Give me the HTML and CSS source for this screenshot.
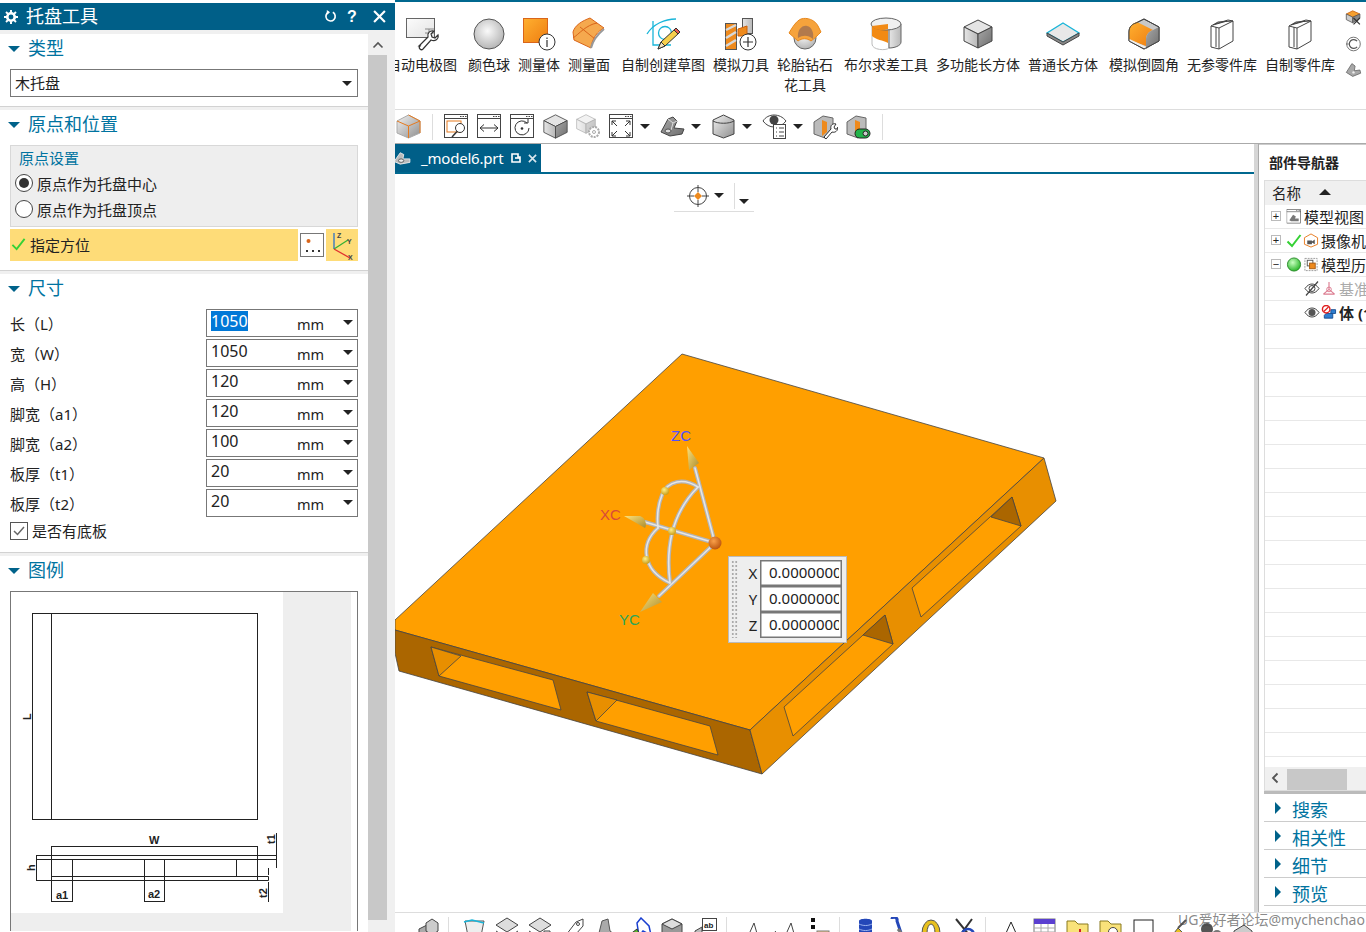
FILE: index.html
```html
<!DOCTYPE html>
<html lang="zh-CN">
<head>
<meta charset="utf-8">
<title>托盘工具</title>
<link rel="stylesheet" href="styles.css">
</head>
<body>
<svg class="defs" aria-hidden="true">
  <defs>
    <linearGradient id="gGray" x1="0" y1="0" x2="1" y2="1"><stop offset="0" stop-color="#f2f2f2"/><stop offset="1" stop-color="#8f8f8f"/></linearGradient>
    <linearGradient id="gSide" x1="0" y1="0" x2="1" y2="0"><stop offset="0" stop-color="#e6e6e6"/><stop offset="1" stop-color="#b8b8b8"/></linearGradient>
    <linearGradient id="gDark" x1="0" y1="0" x2="1" y2="1"><stop offset="0" stop-color="#a8a8a8"/><stop offset="1" stop-color="#6e6e6e"/></linearGradient>
    <linearGradient id="gOrange" x1="0" y1="0" x2="1" y2="1"><stop offset="0" stop-color="#ffb030"/><stop offset="1" stop-color="#ee7d11"/></linearGradient>
    <radialGradient id="gBall" cx=".45" cy=".4" r=".65"><stop offset="0" stop-color="#fafafa"/><stop offset="1" stop-color="#b0b0b0"/></radialGradient>
    <radialGradient id="gGreen" cx=".4" cy=".35" r=".7"><stop offset="0" stop-color="#c8ffc0"/><stop offset="1" stop-color="#22b322"/></radialGradient>
    <radialGradient id="gOrg" cx=".4" cy=".35" r=".7"><stop offset="0" stop-color="#f9a04a"/><stop offset="1" stop-color="#b8500a"/></radialGradient>
    <radialGradient id="gYel" cx=".4" cy=".35" r=".7"><stop offset="0" stop-color="#fff08a"/><stop offset="1" stop-color="#c89a14"/></radialGradient>
    <linearGradient id="gCone" x1="0" y1="0" x2="1" y2="1"><stop offset="0" stop-color="#ffe27a"/><stop offset="1" stop-color="#a98c30"/></linearGradient>
    <symbol id="cube" viewBox="0 0 30 30">
      <path d="M15 1 29 8 15 15 1 8Z" fill="#e4e4e4" stroke="#444" stroke-linejoin="round"/>
      <path d="M1 8 15 15V29L1 22Z" fill="url(#gSide)" stroke="#444" stroke-linejoin="round"/>
      <path d="M29 8 15 15V29L29 22Z" fill="url(#gDark)" stroke="#444" stroke-linejoin="round"/>
    </symbol>
    <symbol id="book" viewBox="0 0 24 32">
      <path d="M1 8 8 4 23 3V23L9 31 1 29Z" fill="#fff" stroke="#444"/>
      <path d="M1 8 9 10V31M9 10 23 3M6 9 6 29M5 6 18 2 23 3M3 7 17 3" fill="none" stroke="#444"/>
    </symbol>
    <symbol id="win" viewBox="0 0 25 25">
      <rect x=".5" y=".5" width="23" height="23" fill="#fff" stroke="#444"/>
      <path d="M0 4.5H24" stroke="#444"/><path d="M16 2.5h1.500M18.500 2.500h1.500M21 2.500h1.500" stroke="#444"/>
    </symbol>
  </defs>
</svg>
<div class="app">
  <aside class="panel">
    <div class="titlebar">
      <svg class="t-gear" viewBox="0 0 16 16"><circle cx="8" cy="8" r="4.300" fill="none" stroke="#fff" stroke-width="3"/><path d="M8 0v3M8 13v3M0 8h3M13 8h3M2.300 2.300l2.200 2.200M11.500 11.500l2.200 2.200M2.300 13.700l2.200-2.200M11.500 4.500l2.200-2.200" stroke="#fff" stroke-width="2.200"/></svg>
      <span class="t-name">托盘工具</span>
      <svg class="t-btn" viewBox="0 0 14 14"><path d="M9.500 2.500A5 5 0 1 1 5 2.300" fill="none" stroke="#fff" stroke-width="1.800"/><path d="M3 0v5l3.500-2.500z" fill="#fff"/></svg>
      <span class="t-help">?</span>
      <svg class="t-btn t-close" viewBox="0 0 12 12"><path d="M1 1 11 11M11 1 1 11" stroke="#fff" stroke-width="2"/></svg>
    </div>
    <div class="panel-body">
      <div class="sections">
        <section class="section">
          <h2 class="sec-head"><i class="tri"></i>类型</h2>
          <div class="select"><span>木托盘</span><i class="caret"></i></div>
        </section>
        <section class="section">
          <h2 class="sec-head"><i class="tri"></i>原点和位置</h2>
          <div class="group">
            <div class="group-title">原点设置</div>
            <div class="radio-row"><i class="radio on"></i>原点作为托盘中心</div>
            <div class="radio-row"><i class="radio"></i>原点作为托盘顶点</div>
          </div>
          <div class="spec-row">
            <div class="spec-label">
              <svg class="spec-check" viewBox="0 0 16 14"><path d="M1.500 8 6 12.500 14.500 1.500" fill="none" stroke="#35d135" stroke-width="2"/></svg>
              指定方位
            </div>
            <div class="spec-dots">
              <svg viewBox="0 0 22 22"><circle cx="7.500" cy="7" r="2" fill="#d9651a"/><path d="M5 16h2v2H5zM11 16h2v2h-2zM17 16h2v2h-2z" fill="#333"/></svg>
            </div>
            <div class="spec-axis">
              <svg viewBox="0 0 32 32"><path d="M8 20V4" stroke="#2a70c8" stroke-width="1.300"/><path d="M8 20 22 11" stroke="#35b035" stroke-width="1.300"/><path d="M8 20 24 29" stroke="#e03030" stroke-width="1.300"/><text x="11" y="9" class="ax">Z</text><text x="21" y="15" class="ax">Y</text><text x="22" y="31" class="ax">X</text></svg>
            </div>
          </div>
        </section>
        <section class="section">
          <h2 class="sec-head"><i class="tri"></i>尺寸</h2>
          <div class="dims">
            <div class="dim"><label class="dim-name">长（L）</label><div class="field"><span class="val sel">1050</span><span class="unit">mm</span><i class="caret"></i></div></div>
            <div class="dim"><label class="dim-name">宽（W）</label><div class="field"><span class="val">1050</span><span class="unit">mm</span><i class="caret"></i></div></div>
            <div class="dim"><label class="dim-name">高（H）</label><div class="field"><span class="val">120</span><span class="unit">mm</span><i class="caret"></i></div></div>
            <div class="dim"><label class="dim-name">脚宽（a1）</label><div class="field"><span class="val">120</span><span class="unit">mm</span><i class="caret"></i></div></div>
            <div class="dim"><label class="dim-name">脚宽（a2）</label><div class="field"><span class="val">100</span><span class="unit">mm</span><i class="caret"></i></div></div>
            <div class="dim"><label class="dim-name">板厚（t1）</label><div class="field"><span class="val">20</span><span class="unit">mm</span><i class="caret"></i></div></div>
            <div class="dim"><label class="dim-name">板厚（t2）</label><div class="field"><span class="val">20</span><span class="unit">mm</span><i class="caret"></i></div></div>
          </div>
          <div class="check-row"><svg class="checkbox" viewBox="0 0 18 18"><rect x=".5" y=".5" width="17" height="17" fill="#fff" stroke="#555"/><path d="M4 9l3.500 3.500L14 5" fill="none" stroke="#666" stroke-width="1.500"/></svg>是否有底板</div>
        </section>
        <section class="section last">
          <h2 class="sec-head"><i class="tri"></i>图例</h2>
          <div class="legend">
            <div class="legend-inner">
            <svg class="legend-img" viewBox="11 592 272 321">
              <g fill="none" stroke="#222" stroke-width="1">
                <rect x="32.500" y="613.500" width="225" height="206"/>
                <path d="M51.500 613V820"/>
                <path d="M51.500 846V902M257.500 846V880M51 846.500H257"/>
                <path d="M36 855.500H276.500V859.500H36M36.500 855V880.500M36 880.500H268.500V876.500H51.500"/>
                <path d="M72.500 859V902M144.500 859V902M164.500 859V902M236.500 859V876"/>
                <path d="M51 901.500H72M144 901.500H164"/>
                <path d="M276.500 833V868M268.500 868V875M268.500 882V902"/>
              </g>
              <g class="lg-t">
                <text x="149" y="844">W</text>
                <text x="56" y="899">a1</text>
                <text x="148" y="898">a2</text>
                <text transform="translate(31 720) rotate(-90)">L</text>
                <text transform="translate(35 871) rotate(-90)">h</text>
                <text transform="translate(275 844) rotate(-90)">t1</text>
                <text transform="translate(267 898) rotate(-90)">t2</text>
              </g>
            </svg>
            </div>
          </div>
        </section>
      </div>
      <div class="vscroll">
        <div class="v-up"><svg viewBox="0 0 12 8"><path d="M1.500 6.500 6 2l4.500 4.500" fill="none" stroke="#555" stroke-width="1.600"/></svg></div>
        <div class="v-thumb"></div>
      </div>
    </div>
  </aside>

  <main class="main">
    <div class="ribbon">
      <div class="rb-item first">
        <svg class="rb-ic" viewBox="0 0 36 36"><rect x="2.500" y="2.500" width="28" height="19" fill="#fff" stroke="#555"/><rect x="2.500" y="2.500" width="28" height="19" fill="url(#gGray)" opacity=".25"/><path d="M21 13h9M21 17h9M25 13v8" stroke="#888"/><path d="M15 30 24 21c-1-4 2-7 6-6l-3 3 1 3 3 1 3-3c1 4-3 7-7 5l-8 9c-2 2-5-1-3-3z" fill="#fff" stroke="#333" stroke-width="1.200"/></svg>
        <span>自动电极图</span>
      </div>
      <div class="rb-item sp">
        <svg class="rb-ic" viewBox="0 0 36 36"><circle cx="18" cy="18" r="15" fill="url(#gBall)" stroke="#555"/></svg>
        <span>颜色球</span>
      </div>
      <div class="rb-item">
        <svg class="rb-ic" viewBox="0 0 36 36"><rect x="2.500" y="2.500" width="24" height="24" fill="url(#gOrange)" stroke="#d9651a"/><circle cx="26" cy="26" r="8" fill="#fff" stroke="#333"/><path d="M26 24v7M26 21.500v1.500" stroke="#333" stroke-width="1.200"/></svg>
        <span>测量体</span>
      </div>
      <div class="rb-item">
        <svg class="rb-ic" viewBox="0 0 36 36"><path d="M2 16C4 9 11 5 19 2L33 12C27 15 21 22 20 32L3 24Z" fill="#f5a94e" stroke="#d9651a"/><path d="M9 11 24 23M2 22 C8 18 15 9 26 7" fill="none" stroke="#d9651a"/><path d="M20 32C22 24 27 18 33 13" fill="none" stroke="#999" stroke-width="2"/></svg>
        <span>测量面</span>
      </div>
      <div class="rb-item sp">
        <svg class="rb-ic" viewBox="0 0 36 36"><path d="M2 18C8 8 20 3 31 3" fill="none" stroke="#19b5d9" stroke-width="1.300"/><path d="M8 5V29H26" fill="none" stroke="#19b5d9" stroke-width="1.300"/><circle cx="20" cy="17" r="6.500" fill="none" stroke="#19b5d9" stroke-width="1.300"/><path d="M13 33 16 26 30 13 34 17 20 30Z" fill="#f7cf4c" stroke="#333"/><path d="M29 14 33 18 35 16 31 12Z" fill="#e85a4f" stroke="#333"/><path d="M13 33 16 26 20 30Z" fill="#f4e3c0" stroke="#333"/></svg>
        <span>自制创建草图</span>
      </div>
      <div class="rb-item">
        <svg class="rb-ic" viewBox="0 0 36 36"><rect x="2.500" y="7.500" width="11" height="26" fill="#ee8a1d" stroke="#555"/><path d="M3 14 13 9M3 22 13 16M3 30 13 24" stroke="#d8d8d8" stroke-width="2.500"/><rect x="19.500" y="2.500" width="10" height="15" fill="url(#gSide)" stroke="#555"/><path d="M15 13 24 10V20H15Z" fill="#ee8a1d" stroke="#c9600f"/><circle cx="25" cy="26" r="8" fill="#fff" stroke="#333"/><path d="M20 26h10M25 21v10" stroke="#333" stroke-width="1.200"/></svg>
        <span>模拟刀具</span>
      </div>
      <div class="rb-item tall">
        <svg class="rb-ic" viewBox="0 0 36 36"><circle cx="18" cy="22" r="11" fill="url(#gBall)" stroke="#666"/><path d="M2 17C5 12 9 5 14 3 20 1 28 4 31 10L34 16C30 20 27 23 24 25 20 22 15 22 11 25Z" fill="#f6a33c" stroke="#e8871a"/><path d="M11 22C10 14 15 9 20 10S27 17 26 23C21 19 16 19 11 22Z" fill="#b27a4c"/></svg>
        <span>轮胎钻石花工具</span>
      </div>
      <div class="rb-item sp">
        <svg class="rb-ic" viewBox="0 0 36 36"><path d="M4 10V28C4 34 18 35 21 32V15L20 9C15 13 6 13 4 10Z" fill="#fff" stroke="#bbb"/><path d="M4 10C6 13 15 14 20 12V27C15 24 8 24 4 20Z" fill="#f28a14"/><path d="M21 8V32C26 32 33 30 33 26V8Z" fill="url(#gSide)" stroke="#666"/><ellipse cx="18" cy="8" rx="15" ry="6" fill="#f0f0f0" stroke="#666"/><path d="M4 10C6 14 14 15 20 13V8Z" fill="#f28a14"/></svg>
        <span>布尔求差工具</span>
      </div>
      <div class="rb-item">
        <svg class="rb-ic" viewBox="0 0 36 36"><use href="#cube" x="3" y="3" width="30" height="30"/></svg>
        <span>多功能长方体</span>
      </div>
      <div class="rb-item">
        <svg class="rb-ic" viewBox="0 0 36 36"><path d="M18 7 34 17 18 26 2 17Z" fill="#e8e8e8" stroke="#19b5d9" stroke-width="1.300"/><path d="M2 17V20L18 29 34 20V17L18 26Z" fill="#888" stroke="#444"/></svg>
        <span>普通长方体</span>
      </div>
      <div class="rb-item sp">
        <svg class="rb-ic" viewBox="0 0 36 36"><path d="M18 3 33 11V25L18 33 3 25V16C3 10 7 8 10 7Z" fill="#c8c8c8" stroke="#444"/><path d="M3 24V16C3 10 7 7 11 6L27 14C22 16 20 19 20 24V30Z" fill="url(#gOrange)"/><path d="M20 24C20 19 22 16 27 14L33 11V25L20 33Z" fill="url(#gDark)"/><path d="M3 24 20 32" stroke="#eee" stroke-width="2"/><path d="M18 3 33 11V25L18 33 3 25V16C3 10 7 8 10 7Z" fill="none" stroke="#444"/></svg>
        <span>模拟倒圆角</span>
      </div>
      <div class="rb-item">
        <svg class="rb-ic" viewBox="0 0 36 36"><use href="#book" x="6" y="2" width="24" height="32"/></svg>
        <span>无参零件库</span>
      </div>
      <div class="rb-item">
        <svg class="rb-ic" viewBox="0 0 36 36"><use href="#book" x="6" y="2" width="24" height="32"/></svg>
        <span>自制零件库</span>
      </div>
      <div class="rb-side">
        <svg viewBox="0 0 20 20"><path d="M9 1 18 5 9 9 1 5Z" fill="#f5a030" stroke="#c9600f"/><path d="M1 5V12L9 16V9Z" fill="#ccc" stroke="#555"/><path d="M18 5V10L9 16V9Z" fill="#888" stroke="#555"/><path d="M10 10 18 18M18 10 10 18" stroke="#333" stroke-width="1.500"/></svg>
        <svg viewBox="0 0 20 20"><circle cx="10" cy="10" r="8.500" fill="none" stroke="#555"/><path d="M14.500 6.500A5.500 5.500 0 1 0 14.500 13.500" fill="none" stroke="#555" stroke-width="1.500"/><path d="M1 10h3" stroke="#555"/></svg>
        <svg viewBox="0 0 20 20"><path d="M1 13 8 2 12 5 11 11 18 10 19 14 9 18Z" fill="#a8a8a8" stroke="#666"/><circle cx="10" cy="13" r="1.500" fill="#eee"/></svg>
      </div>
    </div>

    <div class="toolbar">
      <svg class="tb" viewBox="0 0 25 25"><path d="M12.500 1 24 7V19L12.500 24 1 19V7Z" fill="url(#gGray)" stroke="#aaa"/><path d="M12.500 12 24 7M12.500 12 1 7M12.500 12V24" stroke="#e67a1e"/><path d="M12.500 1 24 7V19" fill="none" stroke="#e67a1e"/></svg>
      <i class="tb-div"></i>
      <svg class="tb" viewBox="0 0 25 25"><use href="#win" width="25" height="25"/><rect x="3" y="7" width="14" height="11" fill="none" stroke="#e67a1e"/><circle cx="16" cy="14" r="4.500" fill="#fff" stroke="#333"/><path d="M13 17.500 8 23" stroke="#333" stroke-width="1.500"/></svg>
      <svg class="tb" viewBox="0 0 25 25"><use href="#win" width="25" height="25"/><path d="M3 14H21M3 14l4-3.500M3 14l4 3.500M21 14l-4-3.500M21 14l-4 3.500" fill="none" stroke="#333"/></svg>
      <svg class="tb" viewBox="0 0 25 25"><use href="#win" width="25" height="25"/><path d="M17 9A7 7 0 1 0 19 14" fill="none" stroke="#333"/><path d="M14 9h4V5" fill="none" stroke="#333"/><circle cx="12" cy="14.500" r="1.300" fill="#333"/></svg>
      <svg class="tb" viewBox="0 0 25 25"><use href="#cube" x="0" y="0" width="25" height="25"/></svg>
      <svg class="tb" viewBox="0 0 25 25"><g opacity=".45"><use href="#cube" x="0" y="0" width="20" height="20"/></g><circle cx="18" cy="18" r="5" fill="#fff" stroke="#aaa" stroke-width="2" stroke-dasharray="2 1"/><circle cx="18" cy="18" r="1.500" fill="none" stroke="#aaa"/></svg>
      <svg class="tb" viewBox="0 0 25 25"><use href="#win" width="25" height="25"/><path d="M3 7l5 5M3 7v4M3 7h4M21 7l-5 5M21 7v4M21 7h-4M3 22l5-5M3 22v-4M3 22h4M21 22l-5-5M21 22v-4M21 22h-4" fill="none" stroke="#333"/></svg>
      <i class="caret tb-caret"></i>
      <svg class="tb" viewBox="0 0 25 25"><path d="M1 18 8 5 13 3 17 7 14 14 24 15 22 20 10 22Z" fill="url(#gDark)" stroke="#444"/><path d="M8 5 13 9 17 7M13 9 11 16" fill="none" stroke="#ddd"/><ellipse cx="8" cy="17" rx="3" ry="2" fill="#ddd" stroke="#555"/></svg>
      <i class="caret tb-caret"></i>
      <svg class="tb" viewBox="0 0 25 25"><path d="M12.500 1 23 6V20L12.500 24 2 20V6Z" fill="url(#gGray)" stroke="#444"/><path d="M2 7C7 10 18 10 23 7" fill="none" stroke="#444"/></svg>
      <i class="caret tb-caret"></i>
      <svg class="tb" viewBox="0 0 25 25"><path d="M1 7C6 -1 18 -1 24 7 21 11 17 13 12 13 8 13 4 11 1 7Z" fill="#fff" stroke="#444"/><circle cx="12" cy="6" r="4.500" fill="#444"/><rect x="11.500" y="10.500" width="12" height="14" fill="#fff" stroke="#444"/><path d="M14 14h1M17 14h5M14 18h1M17 18h5M14 22h1M17 22h5" stroke="#444"/></svg>
      <i class="caret tb-caret"></i>
      <svg class="tb" viewBox="0 0 25 25"><path d="M1 8 10 2 20 4V14L12 24 1 20Z" fill="#bbb" stroke="#666"/><path d="M9 6V22L14 18V8Z" fill="#ee8a1d"/><path d="M11 23 18 15c-1-4 2-6 5-5l-2 3 1 2 2 0 1-2c0 4-3 6-6 5l-6 7z" fill="#fff" stroke="#333"/></svg>
      <svg class="tb" viewBox="0 0 25 25"><path d="M1 8 10 2 20 4V15L12 24 1 20Z" fill="#bbb" stroke="#666"/><path d="M9 6V22L14 18V8Z" fill="#ee8a1d"/><rect x="9" y="15" width="15" height="9" rx="4.500" fill="#22b34a" stroke="#222"/><circle cx="19.500" cy="19.500" r="2.500" fill="#ccc" stroke="#222"/></svg>
      <i class="tb-div"></i>
    </div>

    <div class="work">
      <div class="work-left">
        <div class="tabs">
          <div class="tab">
            <svg class="tab-ic" viewBox="0 0 20 16"><path d="M1 12 8 2 12 4 11 9 19 9 19 13 8 15Z" fill="#bbb" stroke="#eee"/><ellipse cx="9" cy="11" rx="3" ry="2" fill="#eee" stroke="#555"/></svg>
            <span class="tab-name">_model6.prt</span>
            <svg class="tab-file" viewBox="0 0 10 10"><path d="M1 1H7V4H9V9H1Z" fill="none" stroke="#fff" stroke-width="1.600"/><path d="M4 5h5" stroke="#fff" stroke-width="1.600"/></svg>
            <svg class="tab-close" viewBox="0 0 10 10"><path d="M1 1 9 9M9 1 1 9" stroke="#d8e6ee" stroke-width="1.800"/></svg>
          </div>
        </div>
        <div class="viewport">
          <svg class="scene" viewBox="395 174 859 738">
            <g stroke="#444" stroke-width=".8" stroke-linejoin="round">
              <path d="M682 354 1044 458 750 730 395 630V620Z" fill="#ff9f00"/>
              <path d="M395 630 750 730 762 774 399 671 395 653Z" fill="#ab6600"/>
              <path d="M750 730 1044 458 1056 501 762 774Z" fill="#e88f00"/>
              <path d="M431 647 553 680 561 710 439 676Z" fill="#ff9f00"/>
              <path d="M431 647 461 656 439 676Z" fill="#e88f00"/>
              <path d="M587 692 710 726 718 755 596 721Z" fill="#ff9f00"/>
              <path d="M587 692 617 700 596 721Z" fill="#e88f00"/>
              <path d="M912 588 1012 497 1021 526 921 617Z" fill="#ff9f00"/>
              <path d="M991 517 1012 497 1021 526Z" fill="#ab6600"/>
              <path d="M784 707 885 615 893 644 793 736Z" fill="#ff9f00"/>
              <path d="M863 635 885 615 893 644Z" fill="#ab6600"/>
            </g>
            <g fill="none" stroke-linecap="round">
              <g stroke="#b4b4b4" stroke-width="4">
                <path d="M715 543 695 468"/>
                <path d="M715 543 645 522"/>
                <path d="M715 543 659 596"/>
                <path d="M698 487C684 478 668 480 662 495 657 507 657 518 658 528"/>
                <path d="M698 487C680 505 664 535 670 583"/>
                <path d="M658 528C640 544 642 570 670 583"/>
              </g>
              <g stroke="#e6e6e6" stroke-width="1.600">
                <path d="M715 543 695 468"/>
                <path d="M715 543 645 522"/>
                <path d="M715 543 659 596"/>
                <path d="M698 487C684 478 668 480 662 495 657 507 657 518 658 528"/>
                <path d="M698 487C680 505 664 535 670 583"/>
                <path d="M658 528C640 544 642 570 670 583"/>
              </g>
            </g>
            <path d="M687 446 699 463 689 470Z" fill="url(#gCone)"/>
            <path d="M624 516 640 516C646 518 647 525 645 528Z" fill="url(#gCone)"/>
            <path d="M640 612 653 593 662 602Z" fill="url(#gCone)"/>
            <circle cx="715" cy="543" r="6.500" fill="url(#gOrg)"/>
            <circle cx="665" cy="491" r="4" fill="url(#gYel)"/>
            <circle cx="672" cy="531" r="4" fill="url(#gYel)"/>
            <circle cx="646" cy="560" r="4" fill="url(#gYel)"/>
            <text x="671" y="441" class="ax3" fill="#5050ff">ZC</text>
            <text x="600" y="520" class="ax3" fill="#d84a3a">XC</text>
            <text x="619" y="625" class="ax3" fill="#2aa65a">YC</text>
          </svg>
          <div class="snap">
            <svg class="snap-ic" viewBox="0 0 22 22"><circle cx="11" cy="11" r="8.500" fill="none" stroke="#444"/><path d="M11 0v7M11 15v7M0 11h7M15 11h7" stroke="#444"/><path d="M11 7 15 11 11 15 7 11Z" fill="#ee8a1d"/></svg>
            <i class="caret snap-c1"></i>
            <i class="snap-div"></i>
            <i class="caret snap-c2"></i>
          </div>
          <div class="coords">
            <div class="grip"></div>
            <div class="coord-rows">
              <div class="coord"><span class="c-l">X</span><span class="c-f"><span class="c-v">0.00000000</span></span></div>
              <div class="coord"><span class="c-l">Y</span><span class="c-f"><span class="c-v">0.00000000</span></span></div>
              <div class="coord"><span class="c-l">Z</span><span class="c-f"><span class="c-v">0.00000000</span></span></div>
            </div>
          </div>
        </div>
      </div>
      <aside class="nav">
        <div class="nav-title">部件导航器</div>
        <div class="nav-table">
          <div class="nav-head"><span>名称</span><i class="up-tri"></i></div>
          <div class="tree">
            <div class="node"><i class="pm">+</i><svg class="n-ic n-first" viewBox="0 0 16 16"><use href="#win" width="16" height="16"/><path d="M3 12 7 6 10 8 9 10 13 10 13 13H5Z" fill="#777"/></svg><span>模型视图</span></div>
            <div class="node"><i class="pm">+</i><svg class="n-ic" viewBox="0 0 16 14"><path d="M1.500 8 6 12.500 14.500 1.500" fill="none" stroke="#35d135" stroke-width="2"/></svg><svg class="n-ic" viewBox="0 0 16 16"><path d="M8 1 15 5V12L8 15 1 12V5Z" fill="#fff" stroke="#e67a1e"/><path d="M4 8h5v4H4zM9 9l3-2v5l-3-2" fill="#555"/></svg><span class="n-t2">摄像机</span></div>
            <div class="node"><i class="pm">−</i><svg class="n-ic" viewBox="0 0 16 16"><circle cx="8" cy="8" r="7" fill="url(#gGreen)" stroke="#2a8a2a"/></svg><svg class="n-ic" viewBox="0 0 16 16"><rect x="1.500" y="1.500" width="13" height="13" fill="#fff" stroke="#999" stroke-dasharray="2 1"/><rect x="4" y="3.500" width="6" height="6" fill="none" stroke="#555"/><rect x="6.500" y="6.500" width="6" height="6" fill="#ee8a1d" stroke="#a85a10"/></svg><span class="n-t2">模型历史记录</span></div>
            <div class="node lv2 gray"><svg class="n-ic" viewBox="0 0 16 14"><path d="M1 7C5 1 11 1 15 7 11 13 5 13 1 7Z" fill="#fff" stroke="#444"/><circle cx="8" cy="7" r="3" fill="none" stroke="#444"/><path d="M2 14 14 0" stroke="#444" stroke-width="1.200"/></svg><svg class="n-ic" viewBox="0 0 16 16"><path d="M8 1V9M8 9 2 14M8 9 14 14M2 14H14" fill="none" stroke="#dc7c90" stroke-width="1.200"/><circle cx="8" cy="9" r="2.500" fill="none" stroke="#dc7c90"/></svg><span>基准坐标系</span></div>
            <div class="node lv2 strong"><svg class="n-ic" viewBox="0 0 16 14"><path d="M1 7C5 1 11 1 15 7 11 13 5 13 1 7Z" fill="#fff" stroke="#444"/><circle cx="8" cy="7" r="3.500" fill="#555"/></svg><svg class="n-ic" viewBox="0 0 16 16"><path d="M5 9H12V14H3V11Z" fill="#2e7fd1" stroke="#1a4f90"/><path d="M10 5h5v4h-5z" fill="#2e7fd1" stroke="#1a4f90"/><circle cx="5" cy="4.500" r="4" fill="#fff" stroke="#e02020" stroke-width="1.500"/><path d="M2.500 7 7.500 2" stroke="#e02020" stroke-width="1.500"/></svg><span>体 (1)</span></div>
          </div>
          <div class="hscroll">
            <svg class="h-left" viewBox="0 0 8 12"><path d="M6.500 1.500 2 6l4.500 4.500" fill="none" stroke="#555" stroke-width="1.800"/></svg>
            <i class="h-thumb"></i>
          </div>
        </div>
        <div class="nav-bar"></div>
        <div class="acc"><i class="acc-tri"></i><span>搜索</span></div>
        <div class="acc"><i class="acc-tri"></i><span>相关性</span></div>
        <div class="acc"><i class="acc-tri"></i><span>细节</span></div>
        <div class="acc"><i class="acc-tri"></i><span>预览</span></div>
      </aside>
    </div>

    <div class="bottombar">
      <svg class="bb" viewBox="0 0 25 25"><path d="M4 12 12 8 12 24 4 24Z" fill="#aaa" stroke="#444"/><path d="M11 6 17 2 23 6V14L17 18 11 14Z" fill="#ccc" stroke="#444"/></svg>
      <i class="bb-div"></i>
      <svg class="bb" viewBox="0 0 25 25"><path d="M3 4H22L18 24H7Z" fill="#eee" stroke="#555"/><path d="M2 5 10 3 22 6" fill="none" stroke="#19b5d9" stroke-width="1.500"/></svg>
      <svg class="bb" viewBox="0 0 25 25"><path d="M12 1 23 8 12 15 1 8Z" fill="#ddd" stroke="#444"/><path d="M1 14 12 21 23 14" fill="none" stroke="#444"/></svg>
      <svg class="bb" viewBox="0 0 25 25"><path d="M12 1 23 8 12 15 1 8Z" fill="#ddd" stroke="#444"/><path d="M1 14 12 21 18 18" fill="none" stroke="#444"/><path d="M16 14h6v10h-6z" fill="#eee" stroke="#444"/></svg>
      <svg class="bb" viewBox="0 0 25 25"><path d="M2 22 15 5 22 2 22 9 8 25Z" fill="#fff" stroke="#444"/><circle cx="17" cy="7" r="1.500" fill="none" stroke="#444"/></svg>
      <svg class="bb" viewBox="0 0 25 25"><path d="M3 24 8 4 14 2 16 14 24 20V25Z" fill="#aaa" stroke="#555"/></svg>
      <svg class="bb" viewBox="0 0 25 25"><path d="M14 1 22 9 24 18 16 14 12 19 10 6Z" fill="#fff" stroke="#1a3fd0" stroke-width="1.500"/><path d="M2 18 10 12 14 20 5 25Z" fill="#5ab82a" stroke="#333"/></svg>
      <svg class="bb" viewBox="0 0 25 25"><path d="M12 2 22 7V20L12 25 2 20V7Z" fill="#999" stroke="#444"/><path d="M12 2 22 7 12 12 2 7Z" fill="#ddd" stroke="#444"/></svg>
      <svg class="bb" viewBox="0 0 25 25"><rect x="9.500" y="1.500" width="14" height="12" fill="#fff" stroke="#444"/><text x="11" y="11" class="bb-t">ab</text><path d="M2 14 9 10V25H2Z" fill="#bbb" stroke="#444"/></svg>
      <i class="bb-div"></i>
      <svg class="bb" viewBox="0 0 25 25"><path d="M2 16H22M14 6 6 24M14 6 18 20" fill="none" stroke="#444"/></svg>
      <svg class="bb" viewBox="0 0 25 25"><path d="M2 14 10 24 18 6 22 20" fill="none" stroke="#444"/></svg>
      <svg class="bb" viewBox="0 0 25 25"><rect x="5" y="1" width="4" height="4" fill="#111"/><rect x="5" y="8" width="4" height="4" fill="#111"/><rect x="5" y="15" width="4" height="9" fill="#e02020"/><rect x="11" y="14" width="12" height="11" fill="#f2c98c" stroke="#777"/></svg>
      <i class="bb-div"></i>
      <svg class="bb" viewBox="0 0 25 25"><path d="M6 4C6 1 19 1 19 4V25H6Z" fill="#2447b8"/><path d="M6 7C10 9 15 9 19 7M6 12C10 14 15 14 19 12M6 17C10 19 15 19 19 17" stroke="#9db4f0" fill="none"/></svg>
      <svg class="bb" viewBox="0 0 25 25"><path d="M6 2C6 -1 12 0 11 4L18 25" fill="none" stroke="#2447b8" stroke-width="3"/><path d="M12 12 20 22" stroke="#777" stroke-width="3"/></svg>
      <svg class="bb" viewBox="0 0 25 25"><ellipse cx="12" cy="16" rx="9" ry="13" fill="#e8c11e" stroke="#555"/><ellipse cx="12" cy="16" rx="4" ry="9" fill="#fff" stroke="#555"/></svg>
      <svg class="bb" viewBox="0 0 25 25"><path d="M4 2 22 24M20 2 4 24" stroke="#333" stroke-width="2"/><circle cx="16" cy="18" r="6" fill="none" stroke="#2447b8" stroke-width="2.500"/></svg>
      <i class="bb-div"></i>
      <svg class="bb" viewBox="0 0 25 25"><path d="M3 25 12 5 21 25" fill="none" stroke="#222"/></svg>
      <svg class="bb" viewBox="0 0 25 25"><rect x="2" y="2" width="21" height="23" fill="#fff" stroke="#777"/><rect x="2" y="2" width="21" height="5" fill="#5a3fd0"/><path d="M2 11H23M2 15H23M2 19H23M9 7V25M16 7V25" stroke="#aaa"/></svg>
      <svg class="bb" viewBox="0 0 25 25"><path d="M2 4H10L13 7H23V25H2Z" fill="#f9e27a" stroke="#8a7a20"/><path d="M15 12V22M10 17H20" stroke="#d02020" stroke-width="2"/></svg>
      <svg class="bb" viewBox="0 0 25 25"><path d="M2 4H10L13 7H23V25H2Z" fill="#f9e27a" stroke="#8a7a20"/><circle cx="15" cy="15" r="4.500" fill="#fff" stroke="#444"/></svg>
      <svg class="bb" viewBox="0 0 25 25"><rect x="3" y="3" width="19" height="21" fill="#fff" stroke="#222"/></svg>
      <svg class="bb" viewBox="0 0 25 25"><path d="M3 25 14 11 18 15 9 25Z" fill="#e8c11e" stroke="#555"/><path d="M14 11 22 3" stroke="#555" stroke-width="2"/></svg>
      <svg class="bb" viewBox="0 0 25 25"><circle cx="10" cy="12" r="6" fill="#555"/><circle cx="20" cy="18" r="5" fill="#777"/></svg>
      <svg class="bb" viewBox="0 0 25 25"><path d="M4 14 14 8 22 14V25H4Z" fill="#ccc" stroke="#444"/></svg>
    </div>
    <div class="watermark">UG爱好者论坛@mychenchao</div>
  </main>
</div>
</body>
</html>
```

FILE: styles.css
```css
* { box-sizing: border-box; }
html, body { margin: 0; height: 100%; overflow: hidden; background: #fff; }
body { font-family: "Noto Sans", "Noto Sans CJK SC", sans-serif; color: #222; font-size: 15px; }
i { display: block; font-style: normal; }
.defs { position: absolute; width: 0; height: 0; }
.app { display: flex; height: 932px; width: 1366px; overflow: hidden; }

/* left dialog */
.panel { width: 395px; flex: none; display: flex; flex-direction: column; padding-top: 3px; background: #fff; }
.titlebar { height: 27px; flex: none; background: #005f88; color: #fff; display: flex; align-items: center; padding-left: 4px; }
.t-gear { width: 14px; height: 14px; margin-right: 8px; }
.t-name { font-size: 18px; line-height: 27px; flex: 1; }
.t-btn { width: 13px; height: 13px; }
.t-help { font-family: "Liberation Sans", sans-serif; font-weight: 700; font-size: 16px; width: 14px; margin: 0 14px 0 8px; text-align: center; }
.t-close { margin-right: 9px; }

.panel-body { flex: 1; min-height: 0; display: flex; background: #f0f0f0; padding: 4px 7px 0 0; overflow: hidden; }
.sections { width: 368px; flex: none; display: flex; flex-direction: column; gap: 3px; }
.section { background: #fff; padding: 0 10px 9px; border-bottom: 1px solid #d2d2d2; }
.section.last { flex: 1; min-height: 0; padding-bottom: 0; border-bottom: 0; overflow: hidden; }
.sec-head { margin: 0 0 0 -2px; height: 30px; padding-bottom: 2px; font-size: 18px; font-weight: 400; color: #0073a0; display: flex; align-items: center; line-height: 28px; }
.tri { width: 0; height: 0; border-left: 6px solid transparent; border-right: 6px solid transparent; border-top: 6px solid #00628a; margin-right: 8px; margin-top: 1px; }
.caret { width: 0; height: 0; border-left: 5px solid transparent; border-right: 5px solid transparent; border-top: 5px solid #222; }
.select { margin-top: 5px; height: 28px; border: 1px solid #777; display: flex; align-items: center; justify-content: space-between; padding: 0 5px 0 4px; font-size: 15px; }
.select span { margin-top: -1px; }

.group { margin-top: 5px; height: 82px; background: #eee; border: 1px solid #d8d8d8; }
.group-title { color: #0073a0; font-size: 15px; line-height: 24px; height: 24px; padding-left: 8px; }
.radio-row { height: 26px; display: flex; align-items: center; gap: 4px; padding-left: 4px; font-size: 15px; }
.radio { width: 18px; height: 18px; border-radius: 50%; border: 1.300px solid #444; background: #fff; position: relative; }
.radio.on::after { content: ""; position: absolute; left: 2.500px; top: 2.500px; width: 10.500px; height: 10.500px; border-radius: 50%; background: #333; }
.spec-row { margin-top: 2px; height: 32px; display: flex; align-items: center; }
.spec-label { width: 288px; height: 32px; background: #fedc78; display: flex; align-items: center; padding: 0 0 2px 1px; gap: 4px; font-size: 15px; }
.spec-check { width: 15px; height: 14px; }
.spec-dots { width: 24px; height: 24px; margin: 0 2px; border: 1px solid #777; background: #fff; }
.spec-dots svg { display: block; width: 22px; height: 22px; }
.spec-axis { width: 32px; height: 32px; background: #fedc78; }
.spec-axis svg { display: block; width: 32px; height: 32px; }
.ax { font: 700 7px "Liberation Sans", sans-serif; fill: #444; }

.dims { margin-top: 5px; display: flex; flex-direction: column; gap: 2px; }
.dim { height: 28px; display: flex; align-items: center; }
.dim-name { width: 196px; font-size: 15px; color: #222; }
.field { width: 152px; height: 28px; border: 1px solid #777; display: flex; align-items: center; position: relative; padding-left: 4px; }
.val { font-size: 16px; line-height: 20px; width: 86px; margin-top: -4px; }
.val.sel { background: linear-gradient(#0078d7, #0078d7) no-repeat 0 0 / 37px 100%; color: #fff; }
.unit { font-size: 14.500px; width: 46px; margin-top: 1px; }
.field .caret { margin-top: -2px; }
.check-row { margin-top: 4px; height: 18px; display: flex; align-items: center; gap: 4px; margin-bottom: 4px; font-size: 15px; }
.checkbox { width: 18px; height: 18px; margin-top: 1px; }

.legend { margin-top: 5px; height: 340px; border: 1px solid #777; border-bottom: 0; background: #fff; padding-right: 6px; }
.legend-inner { background: #eee; height: 100%; }
.legend-img { display: block; width: 272px; height: 321px; background: #fff; }
.lg-t text { font: 700 11px "Liberation Sans", sans-serif; fill: #222; }

.vscroll { width: 20px; flex: none; display: flex; flex-direction: column; height: 886px; }
.v-up { height: 21px; background: #f0f0f0; display: flex; align-items: center; justify-content: center; }
.v-up svg { width: 12px; height: 8px; }
.v-thumb { flex: 1; background: #c8c8c8; margin-right: 1px; }

/* main */
.main { flex: 1; min-width: 0; display: flex; flex-direction: column; position: relative; overflow: hidden; }
.ribbon { height: 110px; flex: none; border-top: 2px solid #00688f; border-bottom: 1px solid #ddd; display: flex; gap: 8px; align-items: flex-start; position: relative; }
.rb-item { display: flex; flex-direction: column; align-items: center; flex: none; font-size: 14px; color: #222; line-height: 20px; text-align: center; padding-top: 14px; }
.rb-item.first { margin-left: -8px; }
.rb-item.sp { margin-left: 3px; }
.rb-item.tall { width: 56px; }
.rb-ic { width: 36px; height: 36px; margin-bottom: 3px; flex: none; }
.rb-side { position: absolute; left: 950px; top: 8px; display: flex; flex-direction: column; gap: 10px; }
.rb-side svg { display: block; width: 17px; height: 16px; }

.toolbar { height: 34px; flex: none; border-bottom: 1px solid #aaa; display: flex; align-items: center; gap: 8px; padding-left: 1px; }
.tb { width: 25px; height: 25px; flex: none; }
.tb-div { width: 1px; height: 26px; background: #ddd; margin: 0 3px; flex: none; }
.tb-caret { flex: none; width: 10px; position: relative; left: -2px; }

.work { flex: 1; min-height: 0; display: flex; }
.work-left { flex: 1; min-width: 0; display: flex; flex-direction: column; }
.tabs { height: 30px; flex: none; border-bottom: 2px solid #00688f; display: flex; }
.tab { width: 146px; background: #005f88; color: #fff; display: flex; align-items: center; overflow: hidden; }
.tab-ic { width: 18px; height: 14px; margin-left: -2px; margin-right: 10px; flex: none; }
.tab-name { font-size: 15px; line-height: 28px; letter-spacing: -.2px; }
.tab-file { width: 10px; height: 10px; margin-left: 7px; flex: none; }
.tab-close { width: 9px; height: 9px; margin-left: 7px; flex: none; }
.viewport { flex: 1; min-height: 0; position: relative; background: #fff; overflow: hidden; }
.scene { position: absolute; inset: 0; width: 859px; height: 738px; }
.ax3 { font: 15px "Liberation Sans", sans-serif; }
.snap { position: absolute; left: 279px; top: 8px; width: 80px; height: 30px; border-bottom: 1px solid #ddd; }
.snap-ic { position: absolute; left: 13px; top: 3px; width: 22px; height: 22px; }
.snap-c1 { position: absolute; left: 40px; top: 11px; }
.snap-div { position: absolute; left: 60px; top: 1px; width: 1px; height: 26px; background: #ddd; }
.snap-c2 { position: absolute; left: 65px; top: 17px; }
.coords { position: absolute; left: 333px; top: 382px; width: 119px; height: 87px; background: #eee; border: 1px solid #bbb; display: flex; padding: 3px 4px 0 2px; }
.grip { width: 7px; height: 78px; background: radial-gradient(circle, #aaa 1px, transparent 1.300px) 0 0 / 3.500px 4px; }
.coord-rows { display: flex; flex-direction: column; margin-left: 2px; }
.coord { display: flex; align-items: center; height: 26px; }
.c-l { width: 20px; text-align: center; padding-left: 6px; font-size: 15px; color: #222; }
.c-f { width: 82px; height: 26px; border: 1px solid #777; background: #fff; font-size: 15px; line-height: 22px; padding-left: 8px; color: #222; box-shadow: inset 0 0 0 .5px #777; }
.c-v { display: block; width: 70px; overflow: hidden; white-space: nowrap; }

/* navigator */
.nav { width: 112px; flex: none; border-left: 4px solid #d6d6d6; display: flex; flex-direction: column; padding-left: 1px; background: #fff; box-shadow: inset 1px 0 0 #aaa; padding-bottom: 6px; position: relative; }
.nav-title { height: 36px; flex: none; font-size: 14px; font-weight: 700; line-height: 36px; padding-left: 10px; border-top: 1px solid #ccc; }
.nav-table { flex: 1; min-height: 0; display: flex; flex-direction: column; margin-left: 5px; border-left: 1px solid #ddd; }
.nav-head { height: 25px; flex: none; background: #f0f0f0; border-top: 1px solid #ddd; display: flex; align-items: center; padding: 0 0 2px 7px; font-size: 14.500px; gap: 18px; }
.up-tri { width: 0; height: 0; border-left: 6px solid transparent; border-right: 6px solid transparent; border-bottom: 6px solid #222; }
.tree { flex: 1; min-height: 0; overflow: hidden; position: relative; background: repeating-linear-gradient(#fff 0 23px, #e8e8e8 23px 24px); }
.node { height: 24px; display: flex; align-items: center; padding: 0 0 2px 6px; font-size: 15px; white-space: nowrap; overflow: hidden; position: relative; }
.pm { width: 10px; height: 10px; font-size: 11px; line-height: 9px; text-align: center; border: 1px solid #bbb; font-family: "Liberation Sans", sans-serif; background: #fff; flex: none; margin-right: 5px; color: #222; }
.n-ic { width: 16px; height: 15px; flex: none; margin-right: 1px; }
.n-first { margin-right: 2px; }
.n-t2 { margin-left: 1px; }
.node.lv2 { padding-left: 39px; }
.node.lv2 span { margin-left: 1px; }
.node.gray { color: #aaa; }
.node.strong { font-weight: 700; }
.hscroll { height: 24px; flex: none; background: #f0f0f0; display: flex; align-items: stretch; padding: 2px 0 0 6px; border-bottom: 1px solid #ddd; }
.h-left { width: 8px; height: 12px; margin: 3px 8px 0 0; flex: none; }
.h-thumb { width: 60px; background: #c8c8c8; }
.nav-bar { height: 3px; flex: none; background: #bbb; margin: 0 0 0 5px; }
.acc { height: 28px; flex: none; margin-left: 5px; border-bottom: 1px solid #ccc; display: flex; align-items: center; padding-left: 11px; font-size: 18px; color: #0073a0; gap: 11px; }
.acc span { margin-top: 2px; }
.acc-tri { width: 0; height: 0; border-top: 6px solid transparent; border-bottom: 6px solid transparent; border-left: 6px solid #00628a; }

/* bottom toolbar */
.bottombar { height: 20px; flex: none; border-top: 1px solid #ddd; display: flex; gap: 8px; padding: 4px 0 0 20px; overflow: hidden; align-items: flex-start; }
.bb { width: 25px; height: 25px; flex: none; }
.bb-div { width: 1px; height: 24px; background: #ddd; margin-right: 5px; flex: none; }
.bb-t { font: 700 8px "Liberation Sans", sans-serif; fill: #222; }
.watermark { position: absolute; left: 783px; top: 911px; font-size: 14px; line-height: 18px; white-space: nowrap; color: rgba(70,70,70,.65); }
```
